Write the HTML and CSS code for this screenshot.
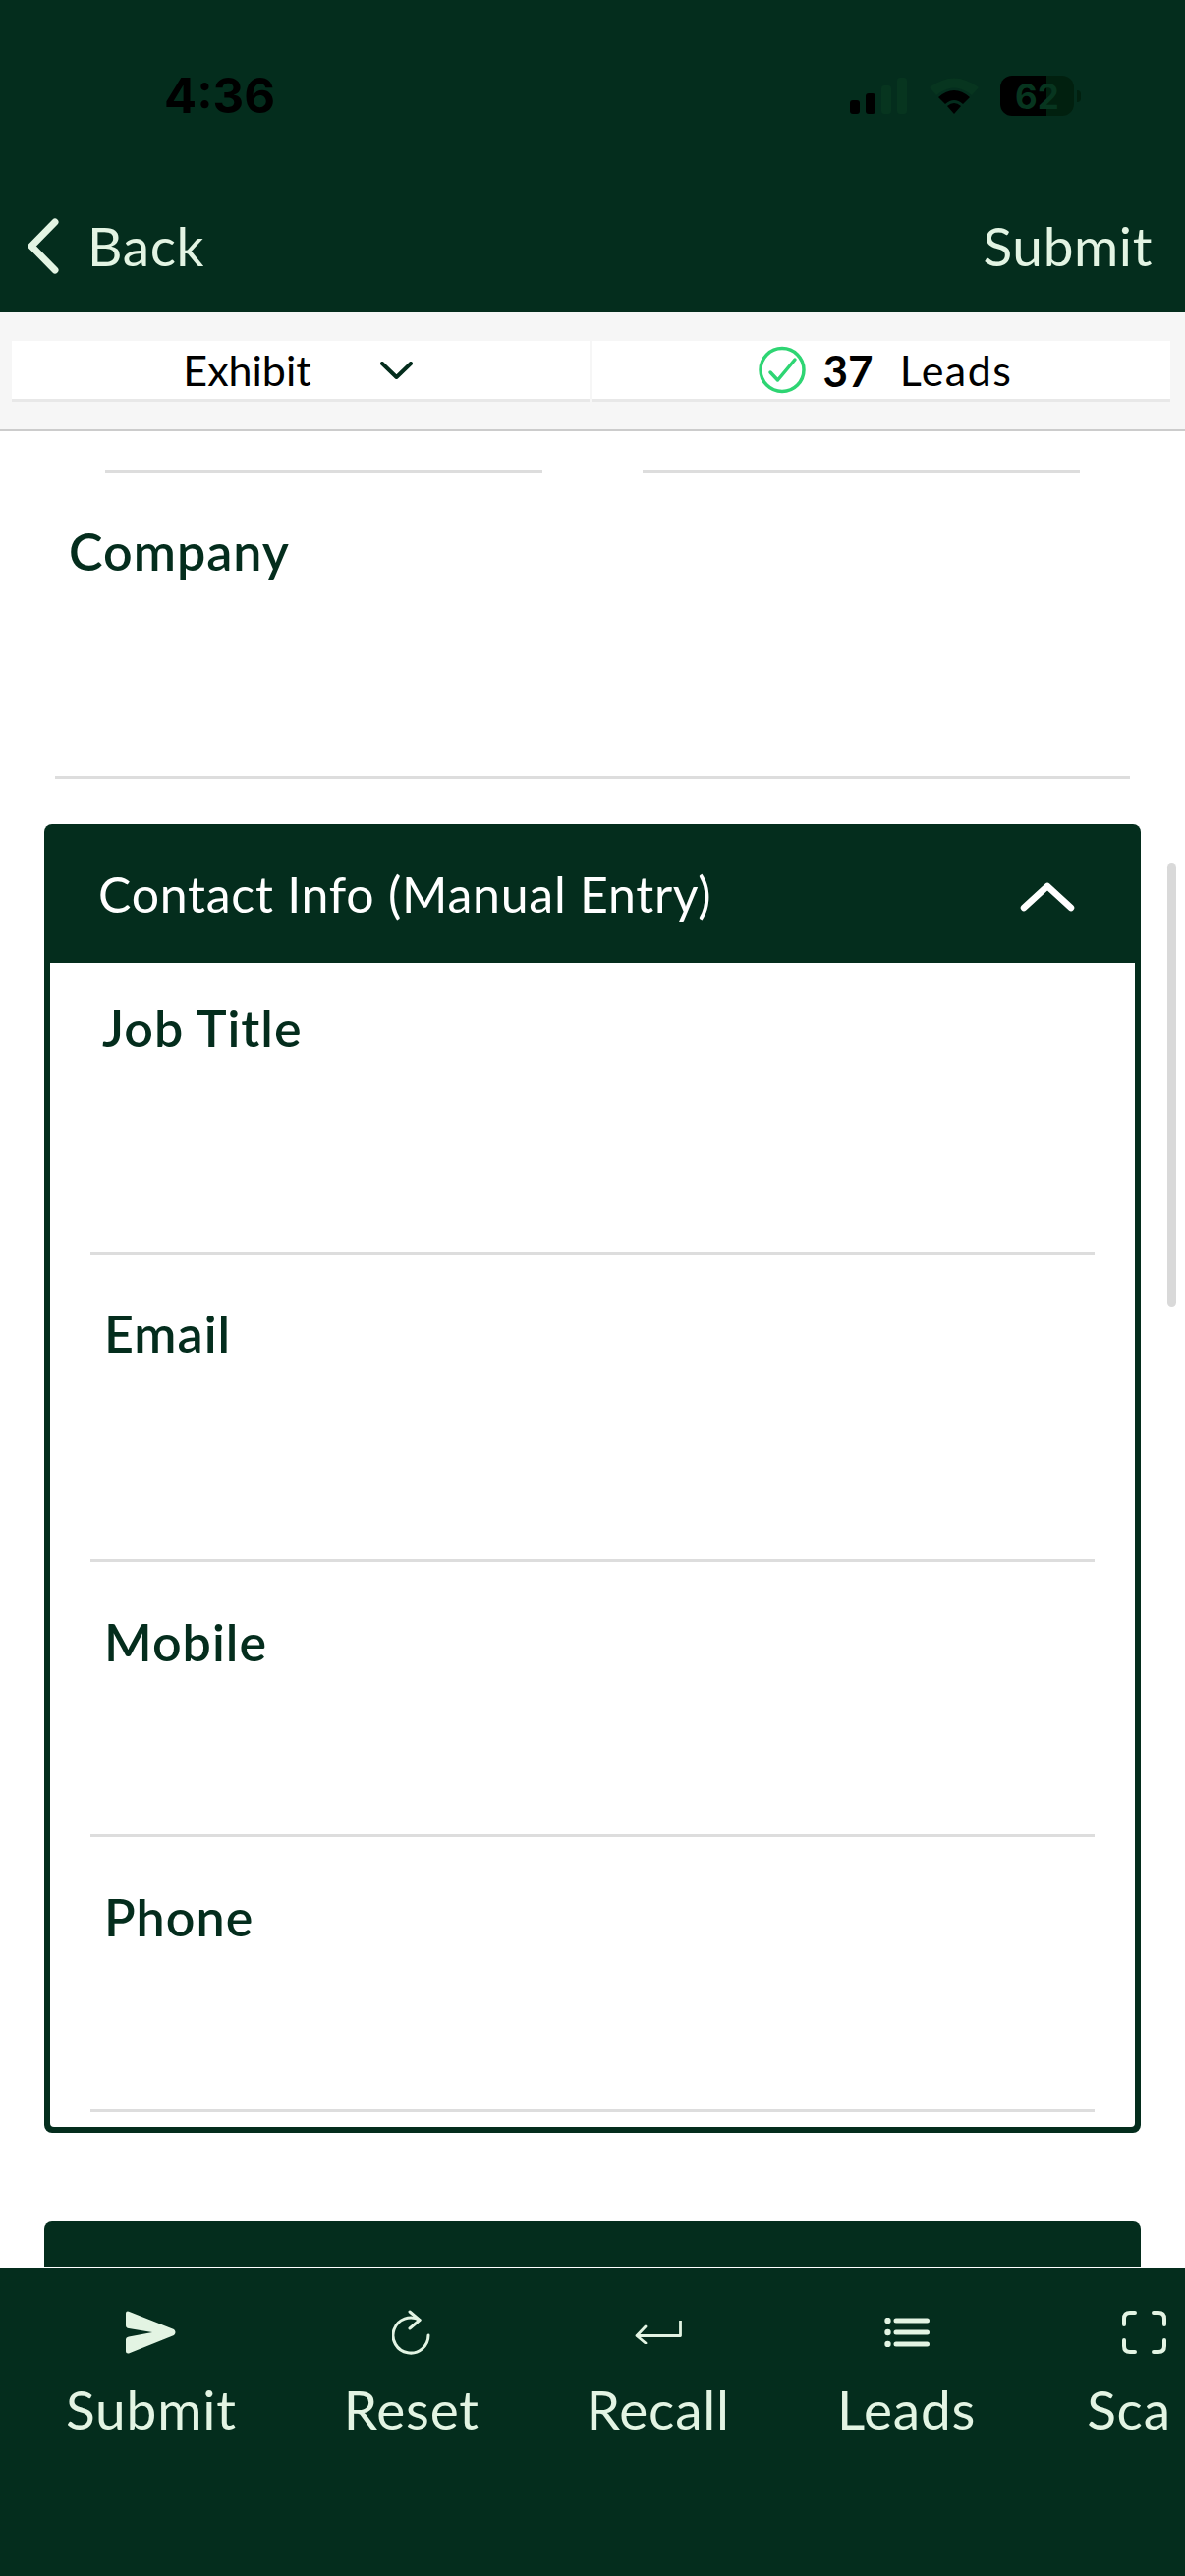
FILE: index.html
```html
<!DOCTYPE html>
<html lang="en">
<head>
  <meta charset="UTF-8" />
  <meta name="viewport" content="width=device-width, initial-scale=1.0" />
  <title>Lead Capture</title>
  <link rel="stylesheet" href="styles.css">
</head>
<body>
  <header class="top">
    <div class="status">
      <span class="time">4:36</span>
      <div class="status-icons">
        <svg class="signal" width="58" height="37" viewBox="0 0 58 37">
          <rect x="0" y="23" width="10" height="14" rx="3" fill="#000"/>
          <rect x="16" y="16" width="10" height="21" rx="3" fill="#000"/>
          <rect x="32" y="8" width="10" height="29" rx="3" fill="#07351f"/>
          <rect x="48" y="0" width="10" height="37" rx="3" fill="#07351f"/>
        </svg>
        <svg class="wifi" width="50" height="37" viewBox="0 0 50 37">
          <path d="M0 10 Q25 -9 50 10 L43 18 Q25 3 7 18 Z" fill="#07351f"/>
          <path d="M9 20 Q25 6 41 20 L34 27 Q25 19 16 27 Z" fill="#000"/>
          <path d="M18 29 Q25 23 32 29 L25 37 Z" fill="#000"/>
        </svg>
        <div class="battery"><span class="battery-text">62</span></div>
        <span class="battery-cap"></span>
      </div>
    </div>
    <nav class="nav">
      <a class="back" href="#">
        <svg width="33" height="57" viewBox="0 0 33 57">
          <path d="M29 4 L5 28.5 L29 53" fill="none" stroke="#e3f4e3" stroke-width="7" stroke-linecap="round" stroke-linejoin="round"/>
        </svg>
        <span>Back</span>
      </a>
      <a href="#">Submit</a>
    </nav>
  </header>

  <div class="subbar">
    <div class="subtabs">
      <div class="subtab">
        <span class="exhibit">Exhibit</span>
        <svg class="exhibit-arrow" width="33" height="18" viewBox="0 0 33 18">
          <path d="M2 2 L16.5 16 L31 2" fill="none" stroke="#042d1d" stroke-width="4" stroke-linecap="round" stroke-linejoin="round"/>
        </svg>
      </div>
      <div class="subtab">
        <svg class="count-icon" width="48" height="49" viewBox="0 0 48 49">
          <circle cx="24" cy="24.5" r="22" fill="none" stroke="#2ed573" stroke-width="3.5"/>
          <path d="M12 27 L19.5 35 L37 14" fill="none" stroke="#2ed573" stroke-width="3.5" stroke-linecap="round" stroke-linejoin="round"/>
        </svg>
        <b class="count">37</b>
        <span class="count-label">Leads</span>
      </div>
    </div>
  </div>

  <main class="form">
    <div class="name-lines">
      <span></span>
      <span></span>
    </div>

    <div class="company">
      <label>Company</label>
    </div>

    <section class="card">
      <div class="card-head">
        <span>Contact Info (Manual Entry)</span>
        <svg class="card-arrow" width="56" height="32" viewBox="0 0 56 32">
          <path d="M4 28 L28 6 L52 28" fill="none" stroke="#fff" stroke-width="6.5" stroke-linecap="round" stroke-linejoin="round"/>
        </svg>
      </div>
      <div class="card-body">
        <div class="field field-job"><label>Job Title</label></div>
        <div class="field field-email"><label>Email</label></div>
        <div class="field"><label>Mobile</label></div>
        <div class="field"><label>Phone</label></div>
      </div>
    </section>

    <section class="card card-closed"></section>

    <div class="scrollbar"></div>
  </main>

  <footer class="tabbar">
    <div class="tabs">
      <a class="tab" href="#">
        <span class="tab-icon">
          <svg width="51" height="44" viewBox="0 0 51 44">
            <path d="M0 2.5 Q0 0 3 .7 L49 19 Q52 22 49 25 L3 43.5 Q0 44 0 41.5 L0 29.5 Q0 27 3 26.5 L27 22 L3 18 Q0 17.5 0 15 Z" fill="#e3f4e3"/>
          </svg>
        </span>
        <span>Submit</span>
      </a>
      <a class="tab" href="#">
        <span class="tab-icon">
          <svg width="40" height="46" viewBox="0 0 40 46">
            <path d="M37 26 A18 18 0 1 1 28 10.500" fill="none" stroke="#e3f4e3" stroke-width="3" stroke-linecap="round"/>
            <path d="M18 2 L28 10.500 L18 19" fill="none" stroke="#e3f4e3" stroke-width="3" stroke-linecap="round" stroke-linejoin="round"/>
          </svg>
        </span>
        <span>Reset</span>
      </a>
      <a class="tab" href="#">
        <span class="tab-icon">
          <svg width="48" height="24" viewBox="0 0 48 24">
            <path d="M46.500 0 L46.500 15.500 L2 15.500 M11 6 L2 15.500 L11 23" fill="none" stroke="#e3f4e3" stroke-width="2.800" stroke-linejoin="round" stroke-linecap="round"/>
          </svg>
        </span>
        <span>Recall</span>
      </a>
      <a class="tab" href="#">
        <span class="tab-icon">
          <svg width="46" height="30" viewBox="0 0 46 30">
            <circle cx="3.500" cy="3" r="3.200" fill="#e3f4e3"/>
            <circle cx="3.500" cy="15" r="3.200" fill="#e3f4e3"/>
            <circle cx="3.500" cy="27" r="3.200" fill="#e3f4e3"/>
            <path d="M12 3 H43.500 M12 15 H43.500 M12 27 H43.500" stroke="#e3f4e3" stroke-width="5" stroke-linecap="round"/>
          </svg>
        </span>
        <span>Leads</span>
      </a>
      <a class="tab tab-last" href="#">
        <span class="tab-icon">
          <svg width="45" height="44" viewBox="0 0 45 44">
            <path d="M2 14 V8 Q2 2 8 2 H13 M32 2 H37 Q43 2 43 8 V14 M43 30 V36 Q43 42 37 42 H32 M13 42 H8 Q2 42 2 36 V30" fill="none" stroke="#e3f4e3" stroke-width="4" stroke-linecap="round"/>
          </svg>
        </span>
        <span>Scan</span>
      </a>
    </div>
  </footer>
</body>
</html>
```

FILE: styles.css
```css
html, body {
  margin: 0;
  padding: 0;
}
body {
  width: 1206px;
  height: 2622px;
  display: flex;
  flex-direction: column;
  overflow: hidden;
  background-color: #fff;
  font-family: Lato, "Noto Sans", sans-serif;
  color: #042d1d;
}
a {
  color: inherit;
  text-decoration: none;
}

/* top bar */
.top {
  height: 318px;
  flex-shrink: 0;
  background-color: #042d1d;
  color: #e3f4e3;
}
.status {
  height: 218px;
  box-sizing: border-box;
  padding: 77px 106px 0 167px;
  display: flex;
  justify-content: space-between;
  align-items: flex-start;
}
.time {
  font-family: Inter, sans-serif;
  font-weight: 700;
  font-size: 49px;
  line-height: 42px;
  color: #000;
}
.status-icons {
  display: flex;
  align-items: center;
  height: 41px;
}
.signal {
  margin-right: 23px;
}
.wifi {
  margin-right: 22px;
}
.battery {
  width: 75px;
  height: 41px;
  border-radius: 12px;
  background: linear-gradient(to right, #000 47px, #01200f 47px);
  display: flex;
  align-items: center;
  justify-content: center;
}
.battery-text {
  font-family: Inter, sans-serif;
  font-weight: 700;
  font-size: 35px;
  color: #07351f;
}
.battery-cap {
  width: 4px;
  height: 12px;
  margin-left: 3px;
  border-radius: 0 4px 4px 0;
  background-color: #01200f;
}
.nav {
  display: flex;
  justify-content: space-between;
  align-items: center;
  height: 64px;
  padding: 0 33px 0 27px;
  font-size: 55px;
  letter-spacing: 0.6px;
}
.back {
  display: flex;
  align-items: center;
  gap: 29px;
}

/* exhibit / leads strip */
.subbar {
  height: 121px;
  flex-shrink: 0;
  box-sizing: border-box;
  padding: 29px 15px 0 12px;
  background-color: #f6f6f6;
  border-bottom: 2px solid #ccc;
}
.subtabs {
  display: grid;
  grid-template-columns: 588px 588px;
  gap: 3px;
}
.subtab {
  height: 59px;
  background-color: #fff;
  border-bottom: 3px solid #e8e8e8;
  display: flex;
  align-items: center;
  justify-content: center;
  color: #000;
  font-size: 43px;
}
.exhibit {
  margin-right: 70px;
}
.exhibit-arrow {
  margin-right: 6px;
}
.count-icon {
  margin-left: 8px;
}
.count {
  margin: 0 25px 0 18px;
  font-size: 44px;
  font-weight: 700;
}
.count-label {
  letter-spacing: 1.5px;
  margin-left: 2px;
}

/* form */
.form {
  flex: 1;
  position: relative;
  overflow: hidden;
  padding: 39px 0 0 0;
}
.name-lines {
  display: grid;
  grid-template-columns: 445px 445px;
  gap: 102px;
  padding-left: 107px;
}
.name-lines span {
  border-top: 3px solid #ddd;
}
.company {
  height: 312px;
  box-sizing: border-box;
  margin: 0 56px;
  padding: 50px 0 0 14px;
  border-bottom: 3px solid #ddd;
}
label {
  display: block;
  font-size: 52px;
  line-height: 60px;
  font-weight: 600;
  letter-spacing: 1px;
}
.card {
  margin: 46px 45px 0 45px;
  padding: 0 6px 6px 6px;
  border-radius: 8px;
  background-color: #042d1d;
}
.card-head {
  height: 141px;
  display: flex;
  align-items: center;
  justify-content: space-between;
  padding: 0 61px 0 49px;
  color: #fff;
  font-size: 50px;
  letter-spacing: 0.75px;
}
.card-arrow {
  margin-top: 5px;
}
.card-body {
  padding: 0 41px 15px 41px;
  border-radius: 0 0 4px 4px;
  background-color: #fff;
}
.field {
  height: 280px;
  box-sizing: border-box;
  padding: 51px 0 0 14px;
  border-bottom: 3px solid #ddd;
}
.field-job {
  height: 297px;
  padding: 36px 0 0 12px;
}
.field-email {
  height: 313px;
  padding-top: 50px;
}
.card-closed {
  height: 200px;
  margin-top: 90px;
}
.scrollbar {
  position: absolute;
  left: 1188px;
  top: 439px;
  width: 9px;
  height: 452px;
  border-radius: 5px;
  background-color: #d9d9d9;
}

/* bottom tabs */
.tabbar {
  height: 315px;
  flex-shrink: 0;
  box-sizing: border-box;
  border-top: 1px solid #fff;
  padding: 43px 15px 0 67px;
  background-color: #042d1d;
  color: #e3f4e3;
  font-size: 55px;
  letter-spacing: 0.8px;
}
.tabs {
  display: flex;
  gap: 109px;
  overflow: hidden;
}
.tab {
  display: flex;
  flex-direction: column;
  align-items: center;
  flex-shrink: 0;
}
.tab-last {
  margin-left: 4px;
}
.tab-icon {
  height: 46px;
  display: flex;
  align-items: center;
  margin-bottom: 22px;
}
```
